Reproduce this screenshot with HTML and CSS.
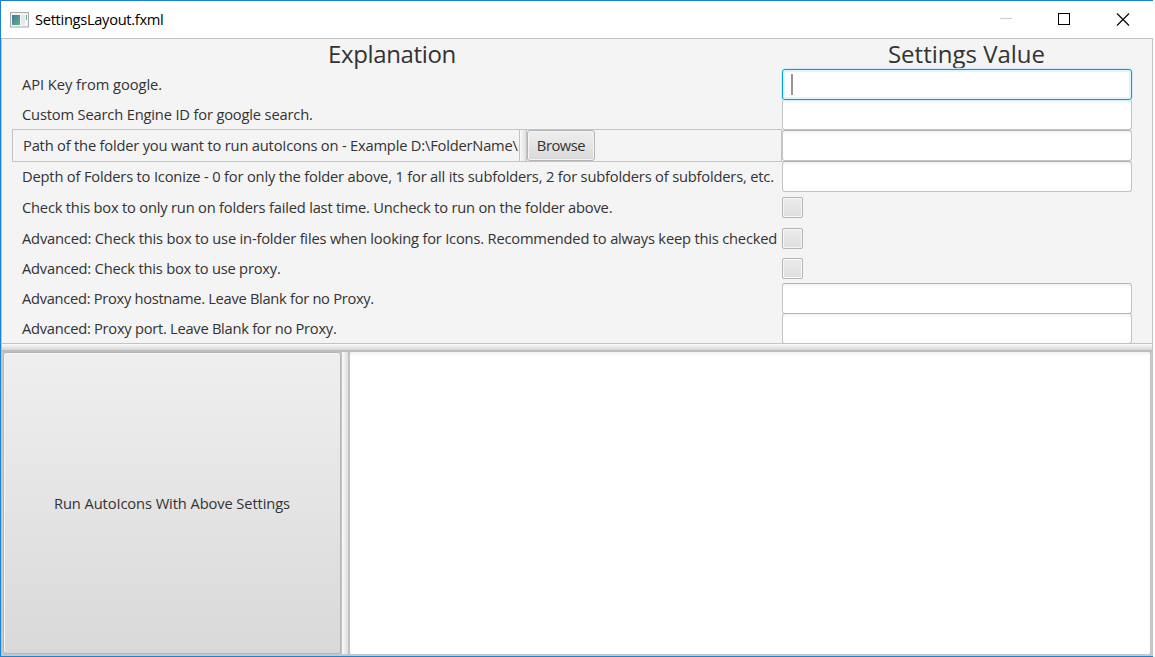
FILE: index.html
```html
<!DOCTYPE html>
<html lang="en">
<head>
<meta charset="utf-8">
<title>SettingsLayout.fxml</title>
<link rel="stylesheet" href="styles.css">
</head>
<body>
<div class="window">
  <header class="titlebar">
    <svg class="app-icon" width="19" height="16" viewBox="0 0 19 16">
      <defs><linearGradient id="g" x1="0" y1="0" x2="1" y2="1"><stop offset="0" stop-color="#4776a0"/><stop offset="1" stop-color="#59b583"/></linearGradient></defs>
      <rect x=".5" y=".5" width="18" height="14.5" fill="#f3f5f6" stroke="#a7abae"/>
      <rect x="2" y="3" width="8" height="10" fill="url(#g)"/>
      <rect x="11" y="3" width="4" height="10" fill="#e4e8ea"/>
      <rect x="16" y="3" width="1" height="5" fill="#69b58c"/>
    </svg>
    <span class="title"><span class="t0">SettingsLayout.fxml</span></span>
    <svg class="controls" width="130" height="14" viewBox="0 0 130 14" fill="none" shape-rendering="crispEdges">
      <path d="M0 5.5h12" stroke="#ccc"/>
      <rect x="58.5" y=".5" width="11" height="11" stroke="#000"/>
      <path d="M117 .5l12 12M129 .5l-12 12" stroke="#000" shape-rendering="auto" stroke-width="1.1"/>
    </svg>
  </header>
  <main class="content">
    <section class="settings">
      <h2 class="head"><span class="h1">Explanation</span></h2>
      <h2 class="head value-head"><span class="h2">Settings Value</span></h2>
      <label class="label"><span class="t1">API Key from google.</span></label>
      <div class="field focused"><i class="caret"></i></div>
      <label class="label"><span class="t2">Custom Search Engine ID for google search.</span></label>
      <div class="field"></div>
      <div class="path-split">
        <label class="path-label"><span class="t3">Path of the folder you want to run autoIcons on - Example D:\FolderName\</span></label>
        <div class="vdivider"></div>
        <button class="button browse"><span class="t10">Browse</span></button>
      </div>
      <div class="field"></div>
      <label class="label"><span class="t4">Depth of Folders to Iconize - 0 for only the folder above, 1 for all its subfolders, 2 for subfolders of subfolders, etc.</span></label>
      <div class="field"></div>
      <label class="label"><span class="t5">Check this box to only run on folders failed last time. Uncheck to run on the folder above.</span></label>
      <div class="check"></div>
      <label class="label"><span class="t6">Advanced: Check this box to use in-folder files when looking for Icons. Recommended to always keep this checked</span></label>
      <div class="check"></div>
      <label class="label"><span class="t7">Advanced: Check this box to use proxy.</span></label>
      <div class="check"></div>
      <label class="label"><span class="t8">Advanced: Proxy hostname. Leave Blank for no Proxy.</span></label>
      <div class="field"></div>
      <label class="label"><span class="t9">Advanced: Proxy port. Leave Blank for no Proxy.</span></label>
      <div class="field"></div>
    </section>
    <div class="hdivider"></div>
    <section class="bottom">
      <button class="button run"><span class="t11">Run AutoIcons With Above Settings</span></button>
      <div class="vdivider"></div>
      <div class="output"></div>
    </section>
  </main>
</div>
</body>
</html>
```
FILE: styles.css
```css
* { box-sizing: border-box; }
body { margin: 0; background: #fff; overflow: hidden; font: 14.7px/20px "Open Sans", "Noto Sans", sans-serif; color: #333; }
span { white-space: nowrap; }
.window { width: 1153px; height: 657px; display: flex; flex-direction: column; border: 1px solid #1883d7; border-right: 0; background: #fff; }
.titlebar { height: 37px; display: flex; align-items: center; padding: 0 23px 0 9px; color: #000; }
.title { margin-left: 6px; padding-bottom: 2px; flex: 1; }
.content { flex: 1; display: flex; flex-direction: column; border: 1px solid #c3c3c3; border-bottom: 0; background: #f4f4f4; }
.settings { height: 304px; display: grid; grid-template-columns: 770px 350px; grid-template-rows: 30px 30px 31px 31px 31px 31px 30px 30px 30px 30px; padding-left: 10px; align-items: center; }
.head { margin: 0; font-size: 24px; line-height: 30px; font-weight: 400; text-align: center; }
.head:first-child { padding-right: 10px; }
.value-head { padding-left: 19px; }
.label { padding: 0 0 1px 10px; white-space: nowrap; }
.field { height: 31px; align-self: start; background: linear-gradient(#f3f3f3, #fff 4px); border: 1px solid #c4c4c4; border-top-color: #b3b3b3; border-radius: 3px; }
.focused { position: relative; z-index: 1; border-color: #039ed3; background: #fff; box-shadow: 0 0 1px 1px #d0eef7, inset 0 0 0 2px #e0f4fa; padding: 4px 0 0 8px; }
.caret { display: block; width: 2px; height: 21px; background: #969696; }
.path-split { height: 33px; align-self: start; margin-top: -1px; display: flex; border: 1px solid #c3c3c3; }
.path-label { width: 506px; padding-left: 10px; line-height: 31px; white-space: nowrap; }
.vdivider { width: 8px; border: 1px solid #c3c3c3; border-width: 0 1px; background: linear-gradient(90deg, #fafafa, #dedede); }
.button { margin: 0; padding: 0; font: inherit; color: #333; border: 1px solid #b5b5b5; border-radius: 3px; background: linear-gradient(#efefef, #d9d9d9); box-shadow: inset 0 0 0 1px #f4f4f4; }
.browse { width: 68px; height: 31px; padding-bottom: 2px; }
.check { width: 21px; height: 21px; border: 1px solid #b5b5b5; border-radius: 2px; background: linear-gradient(#ececec, #dedede); box-shadow: inset 0 0 0 1px #f7f7f7; }
.hdivider { position: relative; height: 9px; border-top: 1px solid #c3c3c3; border-bottom: 2px solid #bcbcbc; background: linear-gradient(#fafafa, #d6d6d6); }
.bottom { flex: 1; display: flex; padding: 0 1px 2px; background: #c8c8c8; }
.run { width: 338px; background: linear-gradient(#efefef, #d9d9d9); box-shadow: inset 1px 1px #f7f7f7; }
.output { flex: 1; background: linear-gradient(#f2f2f2, #fff 4px); border: 1px solid #c3c3c3; border-width: 0 1px; border-radius: 2px; }
.t0 { letter-spacing: -.32px; }
.t1 { letter-spacing: -.05px; }
.t2 { letter-spacing: -.17px; }
.t3 { letter-spacing: -.2px; }
.t4 { letter-spacing: -.185px; }
.t5 { letter-spacing: -.205px; }
.t6 { letter-spacing: -.195px; }
.t7 { letter-spacing: -.21px; }
.t8 { letter-spacing: -.3px; }
.t9 { letter-spacing: -.27px; }
.t10 { letter-spacing: -.45px; }
.t11 { letter-spacing: -.1px; }
.h1 { letter-spacing: -.36px; }
```
